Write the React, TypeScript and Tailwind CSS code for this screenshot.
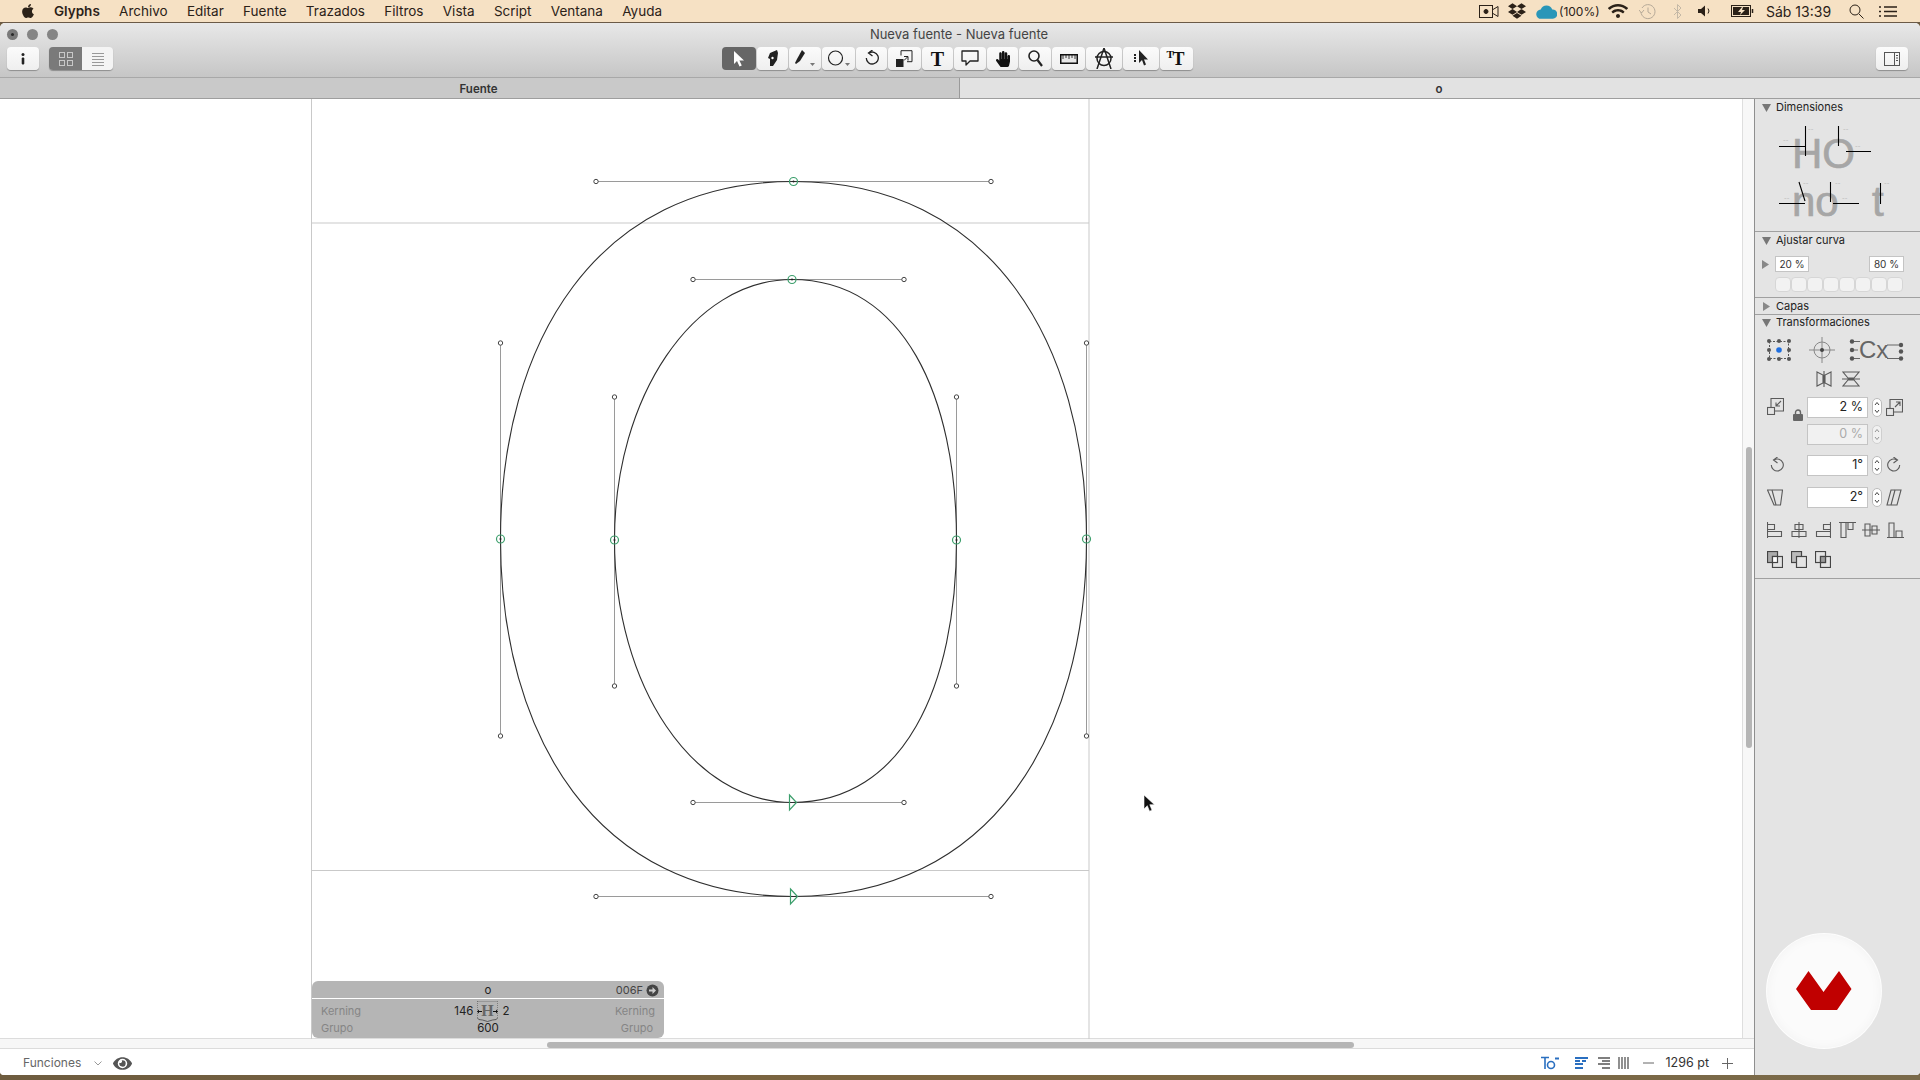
import React from "react";
import { FaApple, FaDropbox, FaWifi, FaEye, FaHandPaper } from "react-icons/fa";

const I = ({ w, h, children, className = "" }: { w: number; h: number; children: React.ReactNode; className?: string }) => (
  <svg width={w} height={h} viewBox={`0 0 ${w} ${h}`} fill="none" stroke="#5a5a5a" strokeWidth={1.1} className={className}>
    {children}
  </svg>
);

const Tool = ({ className, active, children }: { className: string; active?: boolean; children: React.ReactNode }) => (
  <div
    className={`${className} h-[23px] flex items-center justify-center rounded-[4px] ${
      active ? "bg-[#666666]" : "bg-gradient-to-b from-[#fbfbfb] to-[#efefef] shadow-[0_1px_1px_rgba(0,0,0,0.3)]"
    }`}
  >
    {children}
  </div>
);

const Caret = () => <path d="M0 0h5l-2.5 3z" fill="#777" stroke="none" />;

const Tri = ({ open }: { open: boolean }) =>
  open ? (
    <svg width="9" height="8" viewBox="0 0 9 8" className="shrink-0"><path d="M0 0h9L4.500 8z" fill="#777" /></svg>
  ) : (
    <svg width="9" height="9" viewBox="0 0 9 9" className="shrink-0"><path d="M1 0l7 4.500L1 9z" fill="#888" /></svg>
  );

const Head = ({ label, open = true, className = "" }: { label: string; open?: boolean; className?: string }) => (
  <div className={`flex items-center pl-[7px] gap-[5px] text-[11px] text-[#222] ${className}`}>
    <Tri open={open} />
    <span>{label}</span>
  </div>
);

const Stepper = ({ dim }: { dim?: boolean }) => (
  <div className={`w-[10px] h-[19px] rounded-[5px] bg-white border border-[#bbb] flex items-center justify-center ${dim ? "opacity-50" : ""}`}>
    <svg width="6" height="13" viewBox="0 0 6 13" fill="none" stroke="#444" strokeWidth="1">
      <path d="M1 4l2-2.500L5 4M1 9l2 2.500L5 9" />
    </svg>
  </div>
);

const Field = ({ v, dim }: { v: string; dim?: boolean }) => (
  <div className={`w-[61px] h-[21px] border border-[#c4c4c4] flex items-center justify-end pr-[4px] text-[12.5px] ${dim ? "bg-[#f1f1f1] text-[#aaa]" : "bg-white text-[#222]"}`}>
    {v}
  </div>
);

const Dimensions = () => (
  <svg width="165" height="114" viewBox="1755 117 165 114" fontFamily="'Liberation Sans', sans-serif">
    <g fill="#a6a6a6" stroke="#a6a6a6" strokeWidth="0.7">
      <text x="1792" y="169" fontSize="42">HO</text>
      <text x="1792" y="217" fontSize="42">no</text>
      <text x="1872" y="217" fontSize="42">t</text>
    </g>
    <g stroke="#000" strokeWidth="1.1" fill="none">
      <path d="M1779 147.500h26M1805.500 127v30M1838.500 127v20M1846 152.500h25" />
      <path d="M1779 204.500h26M1799 183l6 19M1830.500 183v20M1833 204.500h26M1880.500 184v21" />
    </g>
    <g fontSize="8" fill="#bdbdbd">
      <text x="1783" y="143">--</text>
      <text x="1808" y="132">--</text>
      <text x="1843" y="132">--</text>
      <text x="1855" y="149">--</text>
      <text x="1784" y="201">--</text>
      <text x="1803" y="186">--</text>
      <text x="1835" y="186">--</text>
      <text x="1842" y="201">--</text>
      <text x="1884" y="186">--</text>
    </g>
  </svg>
);

const Canvas = () => {
  const node = (x: number, y: number) => (
    <g key={`${x}-${y}`}>
      <circle cx={x} cy={y} r="4" fill="none" stroke="#3c9f6c" strokeWidth="1.2" />
      <circle cx={x} cy={y} r="1" fill="#222" />
    </g>
  );
  const h = (x: number, y: number) => <circle key={`h${x}-${y}`} cx={x} cy={y} r="2.200" fill="#fff" stroke="#444" strokeWidth="1" />;
  return (
    <svg width="1743" height="940" viewBox="0 99 1743 940" className="absolute inset-0">
      <g stroke="#c9c9c9" strokeWidth="1">
        <path d="M311.500 99V1039M1089 99V1039M311 223h778M311 870.500h778" />
      </g>
      <g stroke="#9a9a9a" strokeWidth="1">
        <path d="M596 181.500H991M596 896.500H991M500.500 343V736M1086.500 343V736" />
        <path d="M693 279.500H904M693 802.500H904M614.500 397V686M956.500 397V686" />
      </g>
      <g stroke="#2e2e2e" strokeWidth="1.100" fill="none">
        <path d="M793.500 181.500C596 181.500 500.500 343 500.500 539C500.500 736 596 896.500 793.500 896.500C991 896.500 1086.500 736 1086.500 539C1086.500 343 991 181.500 793.500 181.500Z" />
        <path d="M792 279.500C693 279.500 614.500 397 614.500 540C614.500 686 693 802.500 792 802.500C904 802.500 956.500 686 956.500 540C956.500 397 904 279.500 792 279.500Z" />
      </g>
      {[[596,181.5],[991,181.5],[596,896.5],[991,896.5],[500.5,343],[500.5,736],[1086.5,343],[1086.5,736],[693,279.5],[904,279.5],[693,802.5],[904,802.5],[614.5,397],[614.5,686],[956.5,397],[956.5,686]].map(([x,y]) => h(x,y))}
      {node(793.5, 181.5)}{node(792, 279.5)}{node(500.5, 539)}{node(1086.5, 539)}{node(614.5, 540)}{node(956.5, 540)}
      <path d="M790.500 889l7 7.500-7 7.500Z" fill="none" stroke="#3c9f6c" strokeWidth="1.200" />
      <path d="M789.500 795l7 7.500-7 7.500Z" fill="none" stroke="#3c9f6c" strokeWidth="1.200" />
      <path d="M1144 795v14l3.300-3.300 2.200 5.500 2.500-1-2.200-5.500h4.700Z" fill="#111" stroke="#fff" strokeWidth="0.600" />
    </svg>
  );
};

const InfoPanel = () => (
  <div className="absolute left-[312px] top-[882px] w-[352px] flex flex-col gap-px text-[11.5px] text-[#222]">
    <div className="h-[17px] bg-[#b5b5b5] rounded-t-[6px] grid grid-cols-3 items-center px-[5px] pt-[1px]">
      <span />
      <span className="text-center">o</span>
      <div className="flex items-center justify-end gap-[3px] text-[#444] text-[11px]">
        <span>006F</span>
        <svg width="13" height="13" viewBox="0 0 13 13"><circle cx="6.500" cy="6.500" r="6" fill="#444" /><path d="M3 5.500h3.500V3l3.500 3.500L6.500 10V7.500H3z" fill="#ccc" /></svg>
      </div>
    </div>
    <div className="h-[39px] bg-[#b5b5b5] rounded-b-[6px] px-[9px] pt-[2px] text-[11px]">
      <div className="h-[19px] grid grid-cols-3 items-center">
        <span className="text-[#858585]">Kerning</span>
        <div className="grid grid-cols-[1fr_auto_1fr] items-center gap-[4px]">
          <span className="text-right text-[11.5px]">146</span>
          <svg width="21" height="21" viewBox="0 0 21 21" fontFamily="'Liberation Serif', serif">
            <text x="10.500" y="15" fontSize="16" fontWeight="700" textAnchor="middle" fill="#666">H</text>
            <path d="M0.500 0V17M20.500 0V17M0.500 .5h20" stroke="#555" strokeWidth="0.600" strokeDasharray="1 1" fill="none" />
            <path d="M0 10.500l2-2v1.500h3v1h-3v1.500zM21 10.500l-2-2v1.500h-3v1h3v1.500z" fill="#111" />
            <path d="M0.500 17q0 2 5 2l5 1.500 5-1.500q5 0 5-2" fill="none" stroke="#333" strokeWidth="0.700" />
          </svg>
          <span className="text-[11.5px]">2</span>
        </div>
        <span className="text-right text-[#858585]">Kerning</span>
      </div>
      <div className="h-[15px] grid grid-cols-3 items-center">
        <span className="text-[#858585]">Grupo</span>
        <span className="text-center text-[11.5px]">600</span>
        <span className="text-right text-[#858585] pr-[2px]">Grupo</span>
      </div>
    </div>
  </div>
);

export default function App() {
  return (
    <div className="w-[1920px] h-[1080px] flex flex-col overflow-hidden bg-[#6e5c3f] font-['Inter',sans-serif]">
      {/* menu bar */}
      <div className="h-[23px] shrink-0 bg-[#f6e1c4] border-b border-[#6b5a47] flex items-center text-[13.5px] text-[#2b2118]">
        <div className="w-[54px] pl-[20px]"><FaApple size={16} color="#2b2118" /></div>
        <div className="flex gap-[19.3px]">
          <span className="font-semibold">Glyphs</span>
          <span>Archivo</span><span>Editar</span><span>Fuente</span><span>Trazados</span><span>Filtros</span><span>Vista</span><span>Script</span><span>Ventana</span><span>Ayuda</span>
        </div>
        <div className="ml-auto flex items-center pr-[23px]">
          <svg width="20" height="13" viewBox="0 0 20 13" fill="none" stroke="#2b2118"><rect x="0.500" y="0.500" width="13" height="12" /><circle cx="7" cy="6.500" r="2" fill="#2b2118" /><path d="M14 4.500l5-3v10l-5-3" /></svg>
          <FaDropbox size={18} color="#2b2118" className="ml-[9px]" />
          <svg width="21" height="15" viewBox="0 0 20 14" className="ml-[10px]"><path d="M5 14a4.500 4.500 0 0 1-.5-9A6 6 0 0 1 15.500 5 4.500 4.500 0 0 1 16 14Z" fill="#2a96b8" /></svg>
          <span className="ml-[2px] text-[12px] w-[38px] whitespace-nowrap pt-[1px]">(100%)</span>
          <FaWifi size={20} color="#2b2118" className="ml-[11px]" />
          <svg width="17" height="17" viewBox="0 0 17 17" fill="none" stroke="#b5a998" className="ml-[11px]"><path d="M3 5a7 7 0 1 1-1 4" /><path d="M0 7l2.500 3L5 7" /><path d="M9 4.500V9l3 2" /></svg>
          <svg width="9" height="15" viewBox="0 0 9 15" fill="none" stroke="#c4b8a6" className="ml-[17px]"><path d="M1 4l7 7-3.500 3.500V.5L8 4l-7 7" /></svg>
          <svg width="13" height="12" viewBox="0 0 13 12" className="ml-[16px]"><path d="M0 4h3l4-3.500v11L3 8H0z" fill="#2b2118" /><path d="M10 3.500q2 2.500 0 5" fill="none" stroke="#2b2118" /></svg>
          <svg width="23" height="12" viewBox="0 0 23 12" fill="none" stroke="#2b2118" className="ml-[20px]"><rect x="0.500" y="0.500" width="19" height="11" /><rect x="2" y="2" width="16" height="8" fill="#2b2118" stroke="none" /><path d="M11 2L7 7h3l-1 3 5-5h-3l1-3z" fill="#f6e1c4" stroke="none" /><path d="M21.500 4v4" strokeWidth="1.500" /></svg>
          <span className="ml-[12px] text-[14px] w-[65px] whitespace-nowrap">Sáb 13:39</span>
          <svg width="15" height="15" viewBox="0 0 15 15" fill="none" stroke="#2b2118" className="ml-[18px]"><circle cx="6" cy="6" r="5" /><path d="M10 10l4.500 4.500" /></svg>
          <svg width="18" height="11" viewBox="0 0 18 11" stroke="#2b2118" strokeWidth="1.500" className="ml-[15px]"><path d="M0 1h2M5 1h13M0 5.500h2M5 5.500h13M0 10h2M5 10h13" /></svg>
        </div>
      </div>

      {/* window */}
      <div className="flex-1 min-h-0 flex flex-col rounded-t-[5px] rounded-b-[4px] overflow-hidden bg-white">
        <div className="h-[55px] shrink-0 bg-gradient-to-b from-[#e8e8e8] to-[#c6c6c6] border-b border-[#a8a8a8]">
          <div className="h-[24px] grid grid-cols-3 items-center">
            <div className="flex gap-[9px] pl-[7px] pb-[2px]">
              <div className="w-[11px] h-[11px] rounded-full bg-[#7a7a7a] flex items-center justify-center"><div className="w-[3px] h-[3px] rounded-full bg-[#2a2a2a]" /></div>
              <div className="w-[11px] h-[11px] rounded-full bg-[#858585]" />
              <div className="w-[11px] h-[11px] rounded-full bg-[#858585]" />
            </div>
            <div className="text-center text-[13px] text-[#444] pr-[2px]">Nueva fuente - Nueva fuente</div>
          </div>
          <div className="h-[23px] flex items-center pl-[7px] pr-[12px]">
            <Tool className="w-[32px]">
              <svg width="4" height="12" viewBox="0 0 4 12" fill="#222"><circle cx="2" cy="1.500" r="1.500" /><rect x="0.700" y="4.500" width="2.600" height="7" rx="1" /></svg>
            </Tool>
            <div className="ml-[10px] w-[64px] h-[23px] flex rounded-[4px] overflow-hidden shadow-[0_1px_1px_rgba(0,0,0,0.3)]">
              <div className="w-[33px] bg-[#7a7a7a] flex items-center justify-center">
                <svg width="14" height="14" viewBox="0 0 14 14" fill="none" stroke="#c8c8c8"><rect x="0.500" y="0.500" width="5" height="5" /><rect x="8.500" y="0.500" width="5" height="5" /><rect x="0.500" y="8.500" width="5" height="5" /><rect x="8.500" y="8.500" width="5" height="5" /></svg>
              </div>
              <div className="w-[31px] bg-[#f4f4f4] flex items-center justify-center">
                <svg width="14" height="14" viewBox="0 0 14 14" stroke="#999"><path d="M1 1.500h12M1 4.500h12M1 7.500h12M1 10.500h12M1 13.500h12" /></svg>
              </div>
            </div>
            <div className="ml-[609px] flex gap-px">
              <Tool active className="w-[34px]">
                <svg width="12" height="16" viewBox="0 0 12 16"><path d="M1 0v13l3-3 2.500 5.500 2.300-1L6.400 9.500H11Z" fill="#fff" /></svg>
              </Tool>
              <Tool className="w-[31px]">
                <svg width="12" height="17" viewBox="0 0 12 17"><path d="M3 3l7-3 1 3-1 7-4 6H3V9L1 8Z" fill="#222" /><circle cx="5.500" cy="8" r="1.200" fill="#fff" /></svg>
              </Tool>
              <Tool className="w-[32px]">
                <svg width="24" height="18" viewBox="0 0 24 18"><path d="M9 0l3 3-5 8-4 3-1-1 2-4Z" fill="#222" /><g transform="translate(17 13)"><Caret /></g></svg>
              </Tool>
              <Tool className="w-[33px]">
                <svg width="24" height="18" viewBox="0 0 24 18" fill="none" stroke="#222"><circle cx="8.500" cy="8" r="7" strokeWidth="1.200" /><g transform="translate(18 13)"><Caret /></g></svg>
              </Tool>
              <Tool className="w-[31px]">
                <svg width="14" height="17" viewBox="0 0 14 17" fill="none" stroke="#222" strokeWidth="1.300"><path d="M4 3a6 6 0 1 1-2.700 5" /><path d="M7.500 0L3.500 3l4 3" /></svg>
              </Tool>
              <Tool className="w-[33px]">
                <svg width="17" height="17" viewBox="0 0 17 17"><rect x="0" y="9" width="7.500" height="8" fill="#222" /><path d="M5 5.500V.7h11v11h-5M8 10.500l3.500-3.500M8 6.500h4v4" fill="none" stroke="#222" /></svg>
              </Tool>
              <Tool className="w-[31px]">
                <span className="font-['Liberation_Serif',serif] font-bold text-[20px] leading-none text-[#111]">T</span>
              </Tool>
              <Tool className="w-[32px]">
                <svg width="18" height="17" viewBox="0 0 18 17" fill="none" stroke="#222" strokeWidth="1.300"><path d="M1 1h16v10H9l-4 4v-4H1Z" strokeLinejoin="round" /></svg>
              </Tool>
              <Tool className="w-[31px]"><FaHandPaper size={16} color="#111" /></Tool>
              <Tool className="w-[32px]">
                <svg width="15" height="17" viewBox="0 0 15 17" fill="none" stroke="#222" strokeWidth="1.600"><circle cx="6" cy="6" r="5" /><path d="M9.500 10l4.500 6" strokeWidth="2.200" /></svg>
              </Tool>
              <Tool className="w-[33px]">
                <svg width="18" height="10" viewBox="0 0 18 10"><rect x="0.750" y="0.750" width="16.500" height="8.500" fill="#e8e8e8" stroke="#111" strokeWidth="1.500" /><path d="M3 1v4M6 1v3M9 1v4M12 1v3M15 1v4" stroke="#111" strokeWidth="0.800" /></svg>
              </Tool>
              <Tool className="w-[36px]">
                <svg width="20" height="21" viewBox="0 0 20 21" fill="none" stroke="#222" strokeWidth="1.500"><circle cx="10" cy="10.500" r="7" /><path d="M10 0L3 21M10 0l7 21M1 9h18" /></svg>
              </Tool>
              <Tool className="w-[36px]">
                <svg width="14" height="17" viewBox="0 0 14 17"><path d="M5 0v13l3-3 2 5.500 2-1L10 9.500h4Z" fill="#222" /><path d="M1 4v9" stroke="#222" strokeWidth="2" strokeDasharray="2 1" /></svg>
              </Tool>
              <Tool className="w-[33px]">
                <span className="relative font-['Liberation_Serif',serif] font-bold text-[18px] leading-none text-[#111] pl-[4px]">T<span className="absolute -left-[2px] -top-[1px] text-[11px]">T</span></span>
              </Tool>
            </div>
            <div className="ml-auto">
              <Tool className="w-[32px]">
                <svg width="16" height="14" viewBox="0 0 16 14" fill="none" stroke="#555"><rect x="0.500" y="0.500" width="15" height="13" /><path d="M10.500 0.500v13" /><path d="M12 3.500h2M12 6h2M12 8.500h2" /></svg>
              </Tool>
            </div>
          </div>
        </div>

        <div className="h-[21px] shrink-0 flex border-b border-[#9e9e9e] text-[11.5px] font-semibold text-[#333]">
          <div className="w-[960px] bg-[#c9c9c9] border-r border-[#9a9a9a] text-center pr-[2px] leading-[22px]">Fuente</div>
          <div className="flex-1 bg-[#e2e2e2] text-center pr-[2px] leading-[22px]">o</div>
        </div>

        <div className="flex-1 min-h-0 flex">
          {/* editing column */}
          <div className="w-[1754px] flex flex-col">
            <div className="h-[940px] flex border-b border-[#dcdcdc]">
              <div className="relative w-[1743px] bg-white border-r border-[#dedede]">
                <Canvas />
                <InfoPanel />
              </div>
              <div className="flex-1 bg-[#f7f7f7] pt-[348px] pl-[3px]">
                <div className="w-[6px] h-[301px] rounded-full bg-[#b5b5b5]" />
              </div>
            </div>
            <div className="h-[10px] bg-[#f7f7f7] border-b border-[#dcdcdc] pt-[3px] pl-[547px]">
              <div className="w-[807px] h-[6px] rounded-full bg-[#b5b5b5]" />
            </div>
            <div className="flex-1 flex items-center pl-[23px] pr-[21px] pt-[2px] bg-white text-[12px]">
              <span className="text-[#666]">Funciones</span>
              <svg width="8" height="5" viewBox="0 0 8 5" fill="none" stroke="#999" className="ml-[13px]"><path d="M0.500 0.500L4 4l3.500-3.500" /></svg>
              <FaEye size={19} color="#555" className="ml-[11px]" />
              <div className="ml-auto flex items-center">
                <svg width="18" height="14" viewBox="0 0 18 14" stroke="#2a6fc0" fill="none" strokeWidth="1.600"><path d="M0 1.500h8M4 1.500V13" /><circle cx="10" cy="9" r="3.500" /><path d="M14 2.500h4" strokeWidth="2" /></svg>
                <svg width="13" height="12" viewBox="0 0 13 12" stroke="#2a6fc0" strokeWidth="1.800" className="ml-[16px]"><path d="M0 1h13M0 4h5M7 4h4M0 7h8M0 11h8" /></svg>
                <svg width="12" height="12" viewBox="0 0 12 12" stroke="#555" strokeWidth="1.400" className="ml-[10px]"><path d="M0 1h12M4 4h8M0 7h12M4 11h8" /></svg>
                <svg width="11" height="12" viewBox="0 0 11 12" stroke="#555" strokeWidth="1.300" className="ml-[8px]"><path d="M1 0v12M4 0v12M7 0v12M10 0v12" /></svg>
                <svg width="11" height="2" viewBox="0 0 11 2" stroke="#666" className="ml-[14px]"><path d="M0 1h11" /></svg>
                <span className="ml-[12px] text-[12.5px] text-[#333]">1296 pt</span>
                <svg width="11" height="11" viewBox="0 0 11 11" stroke="#666" className="ml-[13px]"><path d="M0 5.500h11M5.500 0v11" /></svg>
              </div>
            </div>
          </div>

          {/* sidebar */}
          <div className="flex-1 bg-[#e4e4e4] border-l border-[#8e8e8e] flex flex-col">
            <div className="h-[133px] border-b border-[#a0a0a0]">
              <Head label="Dimensiones" className="h-[17px]" />
              <Dimensions />
            </div>
            <div className="h-[66px] border-b border-[#a0a0a0]">
              <Head label="Ajustar curva" className="h-[17px]" />
              <div className="mt-[7px] h-[16px] flex items-center pl-[6px]">
                <Tri open={false} />
                <div className="ml-[5px] w-[34px] h-[16px] bg-white border border-[#c4c4c4] text-[10px] text-center leading-[14px] text-[#333]">20 %</div>
                <div className="ml-[60px] w-[35px] h-[16px] bg-white border border-[#c4c4c4] text-[10px] text-center leading-[14px] text-[#333]">80 %</div>
              </div>
              <div className="mt-[5px] ml-[20px] flex">
                {[0,1,2,3,4,5,6,7].map((i) => (
                  <div key={i} className="w-[16px] h-[15px] rounded-[4px] bg-[#f2f2f2] border border-[#d6d6d6]" />
                ))}
              </div>
            </div>
            <div className="h-[17px] border-b border-[#a0a0a0]"><Head label="Capas" open={false} className="h-[16px]" /></div>
            <div className="h-[264px] border-b border-[#a0a0a0]">
              <Head label="Transformaciones" className="h-[15px]" />
              <div className="mt-[8px] h-[24px] flex items-center pl-[12px]">
                <svg width="24" height="22" viewBox="0 0 24 22" fill="none" stroke="#555">
                  <rect x="2.500" y="2.500" width="19" height="17" strokeDasharray="2 1.500" />
                  {[[2,2],[12,2],[22,2],[2,11],[22,11],[2,20],[12,20],[22,20]].map(([x,y]) => <circle key={`${x}${y}`} cx={x} cy={y} r="2" fill="#555" stroke="none" />)}
                  <circle cx="12" cy="11" r="2.800" fill="#1f6fe0" stroke="none" />
                </svg>
                <svg width="26" height="26" viewBox="0 0 26 26" fill="none" stroke="#888" className="ml-[18px]"><circle cx="13" cy="13" r="8" /><path d="M13 0v26M0 13h26" /><circle cx="13" cy="13" r="2" fill="#444" stroke="none" /></svg>
                <svg width="55" height="30" viewBox="0 -3 55 30" className="ml-[14px] -my-[3px]" fontFamily="'Liberation Sans', sans-serif">
                  <text x="10" y="20" fontSize="24" fill="#666">Cx</text>
                  <path d="M3 3.500h8M3 12h6M3 20.500h8M38 7h14M38 20.500h14" stroke="#666" />
                  {[[3,3.5],[3,12],[3,20.5],[52,7],[52,13.5],[52,20.5]].map(([x,y]) => <circle key={`${x}${y}`} cx={x} cy={y} r="2.200" fill="#555" />)}
                </svg>
              </div>
              <div className="mt-[9px] h-[16px] flex items-center pl-[61px] gap-[10px]">
                <I w={16} h={16}><path d="M1 1l6 3v8l-6 3zM15 1l-6 3v8l6 3zM8 0v16" /></I>
                <I w={18} h={16}><path d="M1 1h16l-5 6H6zM1 15h16l-5-6H6zM0 8h18" /></I>
              </div>
              <div className="mt-[9px] h-[22px] flex items-center pl-[12px]">
                <I w={17} h={17} className="mb-[2px]"><rect x="0.500" y="9.500" width="7" height="7" /><path d="M4 9V0.500h12.500V13H8M14 3l-5 5M9 4.500V8h4" /></I>
                <svg width="10" height="12" viewBox="0 0 10 12" className="ml-[9px] mt-[16px]"><rect y="5" width="10" height="7" rx="1" fill="#666" /><path d="M2.500 5V3.500a2.500 2.500 0 0 1 5 0V5" fill="none" stroke="#666" strokeWidth="1.400" /></svg>
                <div className="ml-[4px]"><Field v="2 %" /></div>
                <div className="ml-[4px]"><Stepper /></div>
                <I w={17} h={17} className="ml-[4px]"><rect x="0.500" y="9.500" width="7" height="7" /><path d="M4 9V0.500h12.500V13H8M9 8l5-5M10 3h4v4" /></I>
              </div>
              <div className="mt-[5px] h-[22px] flex items-center pl-[52px]">
                <Field v="0 %" dim />
                <div className="ml-[4px]"><Stepper dim /></div>
              </div>
              <div className="mt-[9px] h-[22px] flex items-center pl-[15px]">
                <I w={14} h={17}><path d="M4 3a6 6 0 1 1-2.700 5" /><path d="M7.500 0L3.500 3l4 3" /></I>
                <div className="ml-[23px]"><Field v="1°" /></div>
                <div className="ml-[4px]"><Stepper /></div>
                <I w={14} h={17} className="ml-[5px]"><path d="M10 3a6 6 0 1 0 2.700 5" /><path d="M6.500 0l4 3-4 3" /></I>
              </div>
              <div className="mt-[10px] h-[22px] flex items-center pl-[12px]">
                <I w={16} h={17}><path d="M0.500 1h15l-2 15H7z" /><path d="M5 1l4 15" /></I>
                <div className="ml-[24px]"><Field v="2°" /></div>
                <div className="ml-[4px]"><Stepper /></div>
                <I w={16} h={17} className="ml-[4px]"><path d="M5 1h10l-4 15H1z" /><path d="M9 1L5 16" /></I>
              </div>
              <div className="mt-[14px] h-[16px] flex items-center pl-[12px] gap-[8px]">
                <I w={16} h={16}><path d="M0.500 0v16M0.500 2.500h7v5h-7M0.500 9.500h14v5h-14" /></I>
                <I w={16} h={16}><path d="M8 0v16M4 2.500h8v5H4zM1 9.500h14v5H1z" /></I>
                <I w={16} h={16}><path d="M15.500 0v16M15.500 2.500h-7v5h7M15.500 9.500h-14v5h14" /></I>
                <I w={17} h={16}><path d="M0 0.500h17M2 .5v15h5V.5M9 .5v7h5v-7" /></I>
                <I w={18} h={16} className="-ml-[2px]"><path d="M0 8h18M3 2h5v12H3zM10 4h5v8h-5z" /></I>
                <I w={17} h={16} className="-ml-[1px]"><path d="M0 15.500h17M2 15.500V1h5v14.500M9 15.500V9h6v6.500" /></I>
              </div>
              <div className="mt-[13px] h-[17px] flex items-center pl-[12px] gap-[8px]">
                <svg width="16" height="17" viewBox="0 0 16 17" fill="none" stroke="#444" strokeWidth="1.200"><rect x="0.500" y="0.500" width="10" height="11" fill="#aaa" /><rect x="5.500" y="5.500" width="10" height="11" fill="#e4e4e4" /><rect x="5.500" y="5.500" width="5" height="6" fill="#fff" /></svg>
                <svg width="16" height="17" viewBox="0 0 16 17" fill="none" stroke="#444" strokeWidth="1.200"><rect x="0.500" y="0.500" width="10" height="11" fill="#bbb" /><rect x="5.500" y="5.500" width="10" height="11" fill="#e4e4e4" /></svg>
                <svg width="16" height="17" viewBox="0 0 16 17" fill="none" stroke="#444" strokeWidth="1.200"><rect x="0.500" y="0.500" width="10" height="11" /><rect x="5.500" y="5.500" width="10" height="11" /><rect x="5.500" y="5.500" width="5" height="6" fill="#999" /></svg>
              </div>
            </div>
            <div className="flex-1 pt-[355px] pl-[12px]">
              <div className="w-[114px] h-[114px] rounded-full bg-[#fbfbfb] flex items-center justify-center shadow-[inset_0_0_12px_rgba(0,0,0,0.04),0_0_0_1px_rgba(255,255,255,0.9)]">
                <svg width="56" height="40" viewBox="0 0 56 40"><path d="M0 18L12.500 0 27.500 21 43 0 55.500 18 41 39H15Z" fill="#c00000" /></svg>
              </div>
            </div>
          </div>
        </div>
      </div>
      <div className="h-[5px] shrink-0 bg-gradient-to-r from-[#6e5c3f] via-[#7d6640] to-[#7a6a4a]" />
    </div>
  );
}
